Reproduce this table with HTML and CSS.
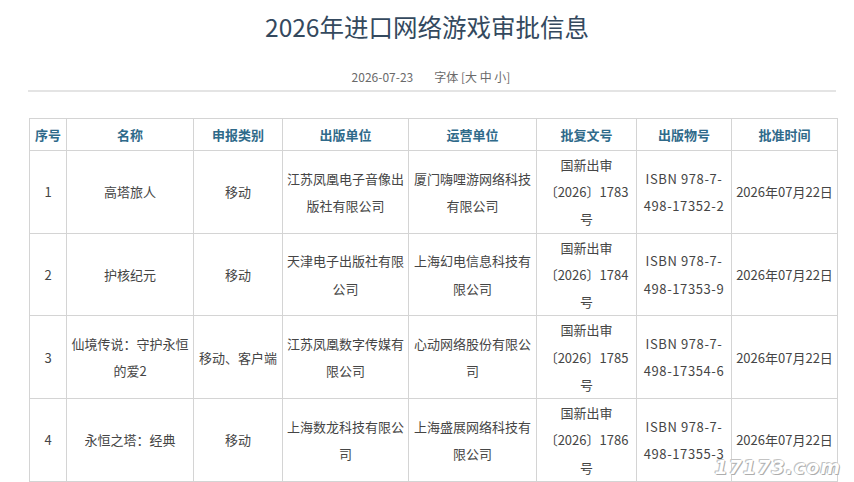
FILE: index.html
```html
<!DOCTYPE html>
<html lang="zh-CN">
<head>
<meta charset="utf-8">
<title>2026年进口网络游戏审批信息</title>
<link rel="stylesheet" href="styles.css">
</head>
<body>
<div class="page">
  <h1 class="title">2026年进口网络游戏审批信息</h1>
  <div class="meta"><span class="date">2026-07-23</span><span class="fontsize">字体 [大 中 小]</span></div>
  <div class="divider"></div>
  <table class="list">
    <colgroup>
      <col class="c1"><col class="c2"><col class="c3"><col class="c4"><col class="c5"><col class="c6"><col class="c7"><col class="c8">
    </colgroup>
    <thead>
      <tr><th>序号</th><th>名称</th><th>申报类别</th><th>出版单位</th><th>运营单位</th><th>批复文号</th><th>出版物号</th><th>批准时间</th></tr>
    </thead>
    <tbody>
      <tr>
        <td>1</td><td>高塔旅人</td><td>移动</td><td>江苏凤凰电子音像出<br>版社有限公司</td><td>厦门嗨哩游网络科技<br>有限公司</td><td>国新出审<br>〔2026〕1783<br>号</td><td class="isbn">ISBN 978-7-<br>498-17352-2</td><td>2026年07月22日</td>
      </tr>
      <tr>
        <td>2</td><td>护核纪元</td><td>移动</td><td>天津电子出版社有限<br>公司</td><td>上海幻电信息科技有<br>限公司</td><td>国新出审<br>〔2026〕1784<br>号</td><td class="isbn">ISBN 978-7-<br>498-17353-9</td><td>2026年07月22日</td>
      </tr>
      <tr>
        <td>3</td><td>仙境传说：守护永恒<br>的爱2</td><td>移动、客户端</td><td>江苏凤凰数字传媒有<br>限公司</td><td>心动网络股份有限公<br>司</td><td>国新出审<br>〔2026〕1785<br>号</td><td class="isbn">ISBN 978-7-<br>498-17354-6</td><td>2026年07月22日</td>
      </tr>
      <tr>
        <td>4</td><td>永恒之塔：经典</td><td>移动</td><td>上海数龙科技有限公<br>司</td><td>上海盛展网络科技有<br>限公司</td><td>国新出审<br>〔2026〕1786<br>号</td><td class="isbn">ISBN 978-7-<br>498-17355-3</td><td>2026年07月22日</td>
      </tr>
    </tbody>
  </table>
  <div class="watermark">17173.com</div>
</div>
</body>
</html>
```

FILE: styles.css
```css
html, body {
  margin: 0;
  padding: 0;
  background: #fff;
}

.page {
  position: relative;
  width: 854px;
  height: 482px;
  overflow: hidden;
  font-family: "Noto Sans CJK SC", "Noto Sans", sans-serif;
}

.title {
  margin: 10px 0 0;
  font-size: 24.5px;
  line-height: 34px;
  font-weight: 400;
  color: #34495e;
  text-align: center;
}

.meta {
  margin-top: 24px;
  display: flex;
  justify-content: center;
  gap: 21px;
  font-size: 12px;
  line-height: 18px;
  color: #6a6a6a;
  padding-left: 8px;
}

.divider {
  margin: 4px 18px 0 28px;
  height: 2px;
  background: #e4e4e4;
}

.list {
  margin: 26px 0 0 29px;
  width: 808px;
  border-collapse: collapse;
  table-layout: fixed;
  font-size: 13px;
  color: #454545;
}

.c1 { width: 37px; }
.c2 { width: 127px; }
.c3 { width: 89px; }
.c4 { width: 126px; }
.c5 { width: 128px; }
.c6 { width: 100px; }
.c7 { width: 95px; }
.c8 { width: 106px; }

.list th,
.list td {
  border: 1px solid #d4d4d4;
  text-align: center;
  vertical-align: middle;
  padding: 0;
  white-space: nowrap;
}

.list th {
  height: 31px;
  font-weight: 700;
  color: #2f6a8a;
  line-height: 20px;
}

.list td {
  height: 81.7px;
  line-height: 27.2px;
}

.list td.isbn {
  letter-spacing: 0.6px;
}

.watermark {
  position: absolute;
  right: 13px;
  top: 456px;
  font-family: "DejaVu Sans", sans-serif;
  font-weight: 700;
  font-style: italic;
  font-size: 19px;
  line-height: 22px;
  letter-spacing: 1px;
  color: #fff;
  text-shadow: 0 0 1px #9a9a9a, 1px 1px 0 #b0b0b0, -1px -1px 0 #c8c8c8;
}
```
